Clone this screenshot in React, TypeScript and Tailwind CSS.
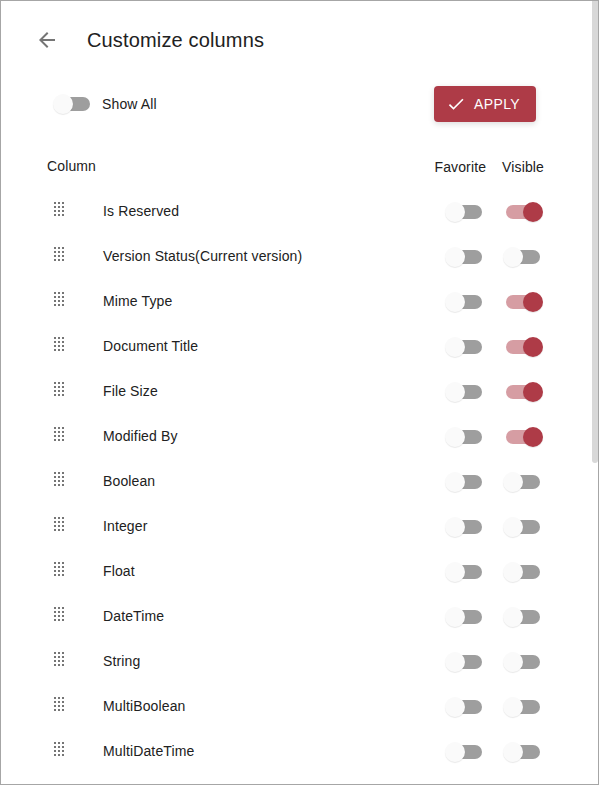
const columns = [
  { name: 'Is Reserved', visible: true },
  { name: 'Version Status(Current version)', visible: false },
  { name: 'Mime Type', visible: true },
  { name: 'Document Title', visible: true },
  { name: 'File Size', visible: true },
  { name: 'Modified By', visible: true },
  { name: 'Boolean', visible: false },
  { name: 'Integer', visible: false },
  { name: 'Float', visible: false },
  { name: 'DateTime', visible: false },
  { name: 'String', visible: false },
  { name: 'MultiBoolean', visible: false },
  { name: 'MultiDateTime', visible: false },
];

function Switch({ on = false }: { on?: boolean }) {
  return (
    <span
      role="switch"
      aria-checked={on}
      className={`relative block h-3.5 w-[34px] shrink-0 rounded-full ${on ? 'bg-[#d69da3]' : 'bg-[#9e9e9e]'}`}
    >
      <span
        className={`absolute -top-[3px] size-5 rounded-full shadow-[0_1px_1px_rgba(0,0,0,0.09)] ${
          on ? '-right-[3px] bg-[#ae3b47]' : '-left-[3px] bg-[#fafafa]'
        }`}
      />
    </span>
  );
}

function DragHandle() {
  return (
    <svg width="10" height="14" viewBox="0 0 10 14" fill="#757575" shapeRendering="crispEdges" className="shrink-0">
      {[0, 4, 8, 12].map((y) =>
        [0, 4, 8].map((x) => <rect key={`${x}-${y}`} x={x} y={y} width="2" height="2" />),
      )}
    </svg>
  );
}

export default function App() {
  return (
    <div className="flex h-[785px] w-[599px] justify-between overflow-hidden border border-[#a6a6a6] bg-white font-['Liberation_Sans',Arial,sans-serif] text-sm leading-5 tracking-[0.13px] text-[#212121]">
      <main className="w-[560px]">
        <header className="flex h-[78px] items-center pl-[34px]">
          <svg width="24" height="24" viewBox="0 0 24 24" fill="#757575">
            <path d="M20 11H7.83l5.59-5.59L12 4l-8 8 8 8 1.41-1.41L7.83 13H20v-2z" />
          </svg>
          <h1 className="ml-7 text-xl tracking-[0.15px]">Customize columns</h1>
        </header>

        <div className="flex h-[50px] items-center pl-[55px]">
          <Switch />
          <span className="ml-3">Show All</span>
          <button className="mr-[25px] ml-auto flex h-9 w-[102px] items-center rounded bg-[#ae3b47] pl-3 font-normal tracking-[0.4px] text-white shadow-[0_2px_6px_rgba(0,0,0,0.14)]">
            <svg width="20" height="20" viewBox="0 0 24 24" fill="currentColor">
              <path d="M9 16.17 4.83 12l-1.42 1.41L9 19 21 7l-1.41-1.41z" />
            </svg>
            <span className="ml-2">APPLY</span>
          </button>
        </div>

        <div className="flex h-[60px] pt-[27px] pl-[46px]">
          <span>Column</span>
          <span className="mt-px ml-auto">Favorite</span>
          <span className="mt-px mr-[17px] ml-4">Visible</span>
        </div>

        <ul>
          {columns.map((column) => (
            <li key={column.name} className="flex h-[45px] items-start pt-[13px] pl-[53px]">
              <DragHandle />
              <span className="ml-[39px] grow whitespace-nowrap leading-[18px]">{column.name}</span>
              <div className="mt-[3px] mr-[21px] flex gap-6">
                <Switch />
                <Switch on={column.visible} />
              </div>
            </li>
          ))}
        </ul>
      </main>
      <div className="h-[462px] w-1.5 rounded-b-sm bg-[#d8d8d8]" />
    </div>
  );
}
